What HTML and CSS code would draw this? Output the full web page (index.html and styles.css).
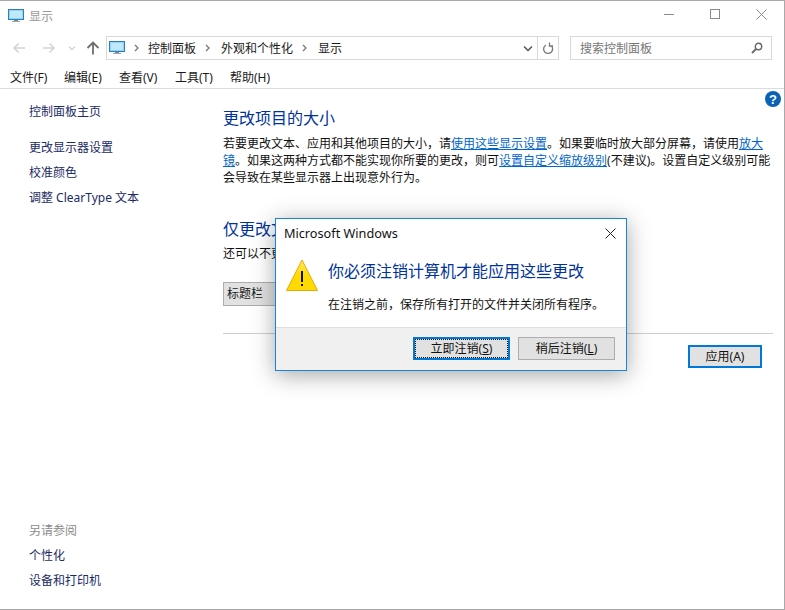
FILE: index.html
```html
<!DOCTYPE html>
<html lang="zh-CN">
<head>
<meta charset="utf-8">
<title>显示</title>
<link rel="stylesheet" href="styles.css">
</head>
<body>
<div class="window">
  <header class="titlebar">
    <svg class="monitor" width="16" height="14" viewBox="0 0 16 14"><rect x="0.5" y="0.5" width="15" height="10" fill="#8fd3f7" stroke="#2f7fb8"/><rect x="2" y="2" width="12" height="7" fill="#bfe9fb"/><rect x="6" y="11" width="4" height="1" fill="#7a8a96"/><rect x="4" y="12" width="8" height="1" fill="#9aa7b0"/></svg>
    <span class="title">显示</span>
    <div class="controls">
      <svg width="11" height="11" viewBox="0 0 11 11"><path d="M0 5.500h10" stroke="#8a8a8a" fill="none"/></svg>
      <svg width="11" height="11" viewBox="0 0 11 11"><rect x="0.500" y="0.500" width="9" height="9" stroke="#8a8a8a" fill="none"/></svg>
      <svg width="11" height="11" viewBox="0 0 11 11"><path d="M0.500 0.500l10 10M10.500 0.500l-10 10" stroke="#8a8a8a" fill="none"/></svg>
    </div>
  </header>
  <nav class="navbar">
    <div class="navbtns">
      <svg class="nav-back" width="14" height="12" viewBox="0 0 14 12"><path d="M13 6H2M6.500 1.500L2 6l4.500 4.500" stroke="#d4d4d4" stroke-width="1.600" fill="none"/></svg>
      <svg class="nav-fwd" width="14" height="12" viewBox="0 0 14 12"><path d="M1 6h11M7.500 1.500L12 6l-4.500 4.500" stroke="#d4d4d4" stroke-width="1.600" fill="none"/></svg>
      <svg class="nav-down" width="8" height="6" viewBox="0 0 8 6"><path d="M1 1.500L4 4.500l3-3" stroke="#d4d4d4" stroke-width="1.300" fill="none"/></svg>
      <svg class="nav-up" width="14" height="14" viewBox="0 0 14 14"><path d="M7 13.500V2M1.500 7L7 1.500 12.500 7" stroke="#6d6d6d" stroke-width="1.800" fill="none"/></svg>
    </div>
    <div class="address">
      <svg class="monitor" width="16" height="14" viewBox="0 0 16 14"><rect x="0.5" y="0.5" width="15" height="10" fill="#8fd3f7" stroke="#2f7fb8"/><rect x="2" y="2" width="12" height="7" fill="#bfe9fb"/><rect x="6" y="11" width="4" height="1" fill="#7a8a96"/><rect x="4" y="12" width="8" height="1" fill="#9aa7b0"/></svg>
      <svg class="crumb-sep crumb-first" width="5" height="8" viewBox="0 0 5 8"><path d="M1 1l3 3-3 3" stroke="#777" stroke-width="1.300" fill="none"/></svg>
      <span>控制面板</span>
      <svg class="crumb-sep" width="5" height="8" viewBox="0 0 5 8"><path d="M1 1l3 3-3 3" stroke="#777" stroke-width="1.300" fill="none"/></svg>
      <span>外观和个性化</span>
      <svg class="crumb-sep" width="5" height="8" viewBox="0 0 5 8"><path d="M1 1l3 3-3 3" stroke="#777" stroke-width="1.300" fill="none"/></svg>
      <span>显示</span>
      <svg class="addr-drop" width="10" height="7" viewBox="0 0 10 7"><path d="M1 1.500l4 4 4-4" stroke="#555" stroke-width="1.500" fill="none"/></svg>
      <div class="refresh">
        <svg width="12" height="13" viewBox="0 0 12 13"><path d="M3 3.500A4.500 4.500 0 1 0 8 3M4.500 0.500v3.500H1" stroke="#777" stroke-width="1.300" fill="none" transform="matrix(-1 0 0 1 12 0)"/></svg>
      </div>
    </div>
    <div class="search">
      <span>搜索控制面板</span>
      <svg width="12" height="12" viewBox="0 0 12 12"><circle cx="7.500" cy="4.500" r="3.200" stroke="#666" stroke-width="1.400" fill="none"/><path d="M5 7l-4 4" stroke="#666" stroke-width="1.800"/></svg>
    </div>
  </nav>
  <div class="menubar">
    <span>文件(F)</span><span>编辑(E)</span><span>查看(V)</span><span>工具(T)</span><span>帮助(H)</span>
  </div>
  <div class="content">
    <aside class="sidebar">
      <div class="side-top">
        <a class="home">控制面板主页</a>
        <a>更改显示器设置</a>
        <a>校准颜色</a>
        <a>调整 ClearType 文本</a>
      </div>
      <div class="side-bottom">
        <span class="seealso">另请参阅</span>
        <a>个性化</a>
        <a>设备和打印机</a>
      </div>
    </aside>
    <main class="main">
      <h2 class="heading">更改项目的大小</h2>
      <p class="para">若要更改文本、应用和其他项目的大小，请<a class="link">使用这些显示设置</a>。如果要临时放大部分屏幕，请使用<a class="link">放大镜</a>。如果这两种方式都不能实现你所要的更改，则可<a class="link">设置自定义缩放级别</a>(不建议)。设置自定义级别可能会导致在某些显示器上出现意外行为。</p>
      <h2 class="heading second">仅更改文本大小</h2>
      <p class="para sub">还可以不更改桌面上其他项的大小，而仅更改特定项的文本大小</p>
      <div class="selectbox">标题栏</div>
      <div class="rule"></div>
      <div class="actions"><button class="apply">应用(A)</button></div>
    </main>
    <svg class="help" width="16" height="16" viewBox="0 0 16 16"><circle cx="8" cy="8" r="8" fill="#0a62b5"/><text x="8" y="12.500" text-anchor="middle" class="help-q">?</text></svg>
  </div>
  <div class="dialog">
    <div class="dlg-title">
      <span>Microsoft Windows</span>
      <svg width="11" height="11" viewBox="0 0 11 11"><path d="M0.500 0.500l10 10M10.500 0.500l-10 10" stroke="#222" fill="none"/></svg>
    </div>
    <div class="dlg-body">
      <svg class="warn" width="32" height="32" viewBox="0 0 32 32"><defs><linearGradient id="wg" x1="0" y1="0" x2="0" y2="1"><stop offset="0" stop-color="#ffe96b"/><stop offset="0.500" stop-color="#ffdc00"/><stop offset="1" stop-color="#ffd800"/></linearGradient></defs><path d="M16 1L31.500 31.500H0.500Z" fill="url(#wg)" stroke="#e8a90c"/><rect x="15" y="12" width="2" height="11" fill="#111"/><rect x="15" y="25" width="2" height="2" fill="#111"/></svg>
      <div class="dlg-text">
        <div class="instruction">你必须注销计算机才能应用这些更改</div>
        <div class="detail">在注销之前，保存所有打开的文件并关闭所有程序。</div>
      </div>
    </div>
    <div class="dlg-footer">
      <button class="btn btn-default"><span class="focus-ring">立即注销(<u>S</u>)</span></button>
      <button class="btn">稍后注销(<u>L</u>)</button>
    </div>
  </div>
</div>
</body>
</html>
```
FILE: styles.css
```css
* { box-sizing: border-box; }
html, body { margin: 0; padding: 0; }
body {
  width: 785px;
  height: 610px;
  overflow: hidden;
  background: #fff;
  font-family: "Noto Sans", "Noto Sans CJK SC", sans-serif;
  font-size: 12px;
  line-height: 17px;
  color: #1a1a1a;
}
.window {
  position: relative;
  width: 785px;
  height: 610px;
  display: flex;
  flex-direction: column;
  border-top: 1px solid #a9a9a9;
  border-right: 1px solid #a9a9a9;
  border-bottom: 1px solid #a9a9a9;
  background: #fff;
}
.titlebar {
  height: 30px;
  display: flex;
  align-items: center;
  padding-left: 8px;
}
.title { margin-left: 5px; color: #9a9a9a; }
.controls {
  margin-left: auto;
  display: flex;
  gap: 35px;
  padding-right: 17px;
  margin-top: -3px;
}
.navbar {
  height: 24px;
  margin-top: 5px;
  display: flex;
  align-items: center;
}
.navbtns {
  width: 106px;
  display: flex;
  align-items: center;
  padding-left: 12px;
}
.nav-fwd { margin-left: 16px; }
.nav-down { margin-left: 12px; }
.nav-up { margin-left: 10px; }
.address {
  width: 453px;
  height: 24px;
  border: 1px solid #d9d9d9;
  display: flex;
  align-items: center;
  padding-left: 2px;
  color: #1a1a1a;
}
.crumb-sep { margin: 0 11px 0 9px; }
.crumb-sep.crumb-first { margin-right: 9px; }
.addr-drop { margin-left: auto; margin-right: 4px; }
.refresh {
  width: 21px;
  height: 22px;
  border-left: 1px solid #d9d9d9;
  display: flex;
  align-items: center;
  justify-content: center;
}
.search {
  width: 202px;
  height: 24px;
  margin-left: 11px;
  border: 1px solid #d9d9d9;
  display: flex;
  align-items: center;
  justify-content: space-between;
  padding: 0 8px 0 9px;
  color: #767676;
}
.menubar {
  height: 29px;
  padding: 7px 0 0 10px;
  display: grid;
  grid-template-columns: 54px 55px 56px 55px auto;
  border-bottom: 1px solid #dcdcdc;
  line-height: 21px;
}
.content {
  position: relative;
  flex: 1;
  display: flex;
  min-height: 0;
}
.sidebar {
  width: 223px;
  flex: none;
  padding: 14px 0 20px 29px;
  display: flex;
  flex-direction: column;
  justify-content: space-between;
}
.side-top, .side-bottom {
  display: flex;
  flex-direction: column;
  gap: 8px;
  color: #1a2a66;
}
.side-top .home { margin-bottom: 11px; }
.seealso { color: #8a8a8a; }
.main { flex: 1; padding: 18px 11px 0 0; min-width: 0; }
.heading {
  margin: 0 0 6px;
  font-size: 16px;
  font-weight: 400;
  line-height: 22px;
  color: #003399;
}
.heading.second { margin: 32px 0 5px; }
.para { margin: 0; color: #111; }
.para.sub { white-space: nowrap; }
.link { color: #0066cc; text-decoration: underline; }
.selectbox {
  width: 110px;
  height: 24px;
  margin-top: 20px;
  padding-left: 3px;
  border: 1px solid #adadad;
  background: #e1e1e1;
  line-height: 22px;
}
.rule {
  height: 1px;
  margin-top: 27px;
  background: #cfcfcf;
}
.actions {
  margin-top: 11px;
  display: flex;
  justify-content: flex-end;
  padding-right: 11px;
}
.apply {
  width: 74px;
  height: 23px;
  padding: 0;
  border: 2px solid #0078d7;
  background: #e1e1e1;
  font: inherit;
  line-height: 19px;
  color: #111;
}
.help { position: absolute; top: 2px; right: 3px; }
.help-q { font: 700 13px "Liberation Sans", sans-serif; fill: #fff; }
.dialog {
  position: absolute;
  left: 275px;
  top: 217px;
  width: 352px;
  height: 153px;
  display: flex;
  flex-direction: column;
  border: 1px solid #1a83d4;
  background: #fff;
  box-shadow: 0 4px 22px rgba(0, 0, 0, 0.35);
}
.dlg-title {
  height: 29px;
  padding: 0 10px 0 8px;
  display: flex;
  align-items: center;
  justify-content: space-between;
  font-size: 12.7px;
  color: #111;
}
.dlg-body {
  flex: 1;
  display: flex;
  padding: 11px 0 0 10px;
}
.warn { flex: none; }
.dlg-text { margin-left: 10px; padding-top: 1px; }
.instruction {
  font-size: 16px;
  line-height: 22px;
  color: #003399;
}
.detail { margin-top: 14px; color: #111; }
.dlg-footer {
  height: 43px;
  display: flex;
  justify-content: flex-end;
  align-items: flex-start;
  gap: 8px;
  padding: 9px 11px 0 0;
  border-top: 1px solid #dfdfdf;
  background: #f0f0f0;
}
.btn {
  width: 97px;
  height: 23px;
  padding: 0;
  border: 1px solid #adadad;
  background: #e1e1e1;
  font: inherit;
  line-height: 21px;
  color: #111;
}
.btn-default {
  border: 2px solid #0078d7;
  line-height: 19px;
}
.focus-ring {
  display: block;
  height: 19px;
  outline: 1px dotted #111;
  outline-offset: -1px;
}
```
